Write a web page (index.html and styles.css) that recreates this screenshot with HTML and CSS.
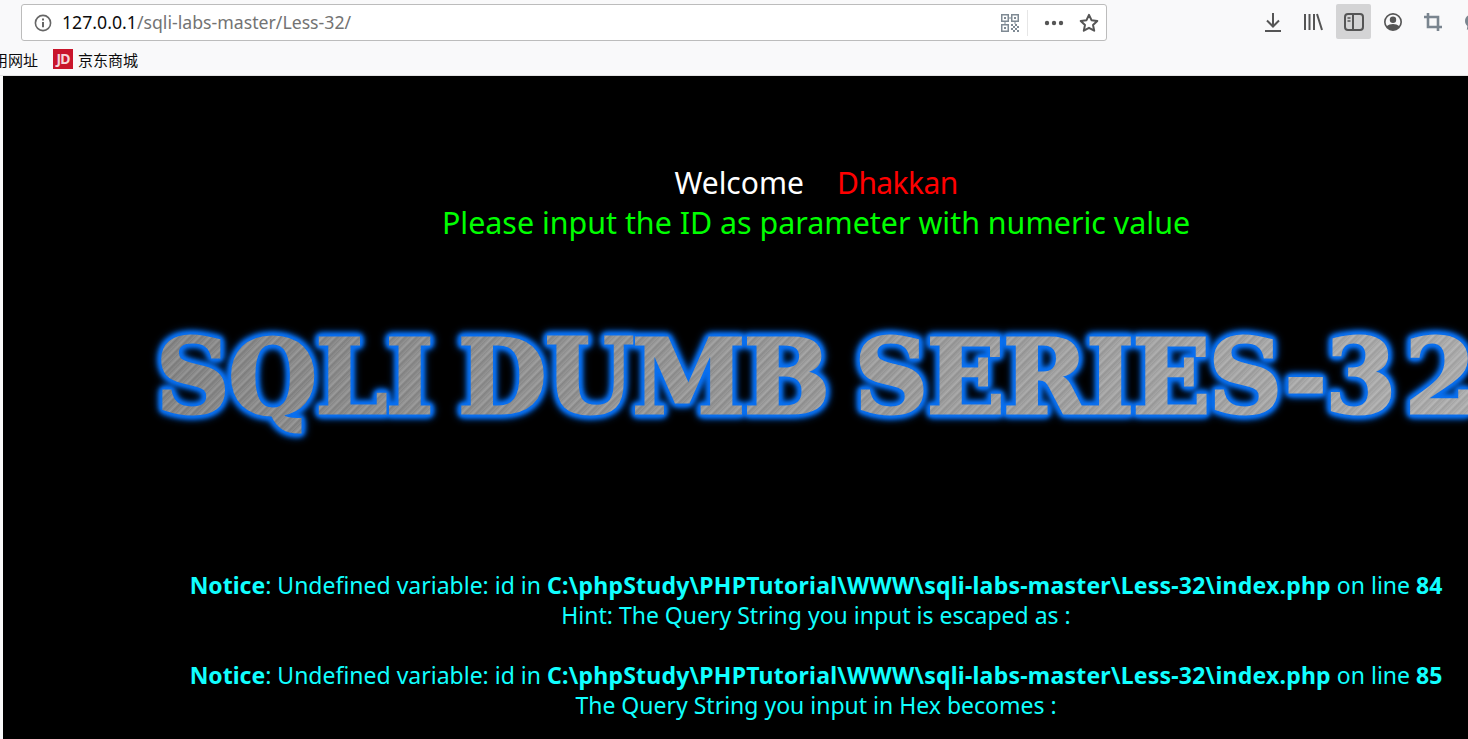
FILE: index.html
```html
<!DOCTYPE html>
<html lang="en">
<head>
  <meta charset="UTF-8">
  <title>Less-32</title>
  <link rel="stylesheet" href="styles.css">
</head>
<body>
  <div class="toolbar">
    <div class="urlbar">
      <svg class="info" width="18" height="18" viewBox="0 0 18 18" fill="none" stroke="#666" stroke-width="1.6">
        <circle cx="9" cy="9" r="7.6"/>
        <path d="M9 8v5.2" stroke-width="2"/>
        <path d="M9 4.400v2" stroke-width="2"/>
      </svg>
      <div class="url"><span class="host">127.0.0.1</span>/sqli-labs-master/Less-32/</div>
      <svg class="qr" width="18" height="18" viewBox="0 0 18 18" fill="#7f8a94">
        <path fill-rule="evenodd" d="M0 0h8v8H0zM1.500 1.500v5h5v-5zM10 0h8v8h-8zM11.500 1.500v5h5v-5zM0 10h8v8H0zM1.500 11.500v5h5v-5z"/>
        <path d="M3 3h2v2H3zM13 3h2v2h-2zM3 13h2v2H3zM10 10h2v2h-2zM14 10h2v2h-2zM12 12h2v2h-2zM16 12h2v2h-2zM10 14h2v2h-2zM14 14h2v2h-2zM12 16h2v2h-2zM16 16h2v2h-2zM8.500 3h1v2h-1zM3 8.500h2v1H3zM13 8.500h2v1h-2z"/>
      </svg>
      <div class="divider"></div>
      <svg class="more" width="20" height="6" viewBox="0 0 20 6" fill="#555">
        <circle cx="3" cy="3" r="2.200"/>
        <circle cx="10" cy="3" r="2.200"/>
        <circle cx="17" cy="3" r="2.200"/>
      </svg>
      <svg class="star" width="20" height="20" viewBox="0 0 20 20" fill="none" stroke="#555" stroke-width="2" stroke-linejoin="round">
        <path d="M10 1.800l2.500 5.400 5.800.7-4.300 4 1.200 5.800-5.200-2.900-5.200 2.900 1.200-5.800-4.300-4 5.800-.7z"/>
      </svg>
    </div>
    <div class="tools">
      <div class="tool">
        <svg width="18" height="20" viewBox="0 0 18 20" fill="none" stroke="#555" stroke-width="2">
          <path d="M9 1v13M3 8.500l6 6 6-6"/>
          <path d="M1 19h16"/>
        </svg>
      </div>
      <div class="tool">
        <svg width="20" height="18" viewBox="0 0 20 18" fill="none" stroke="#555" stroke-width="2">
          <path d="M2 1v16M6.500 1v16M11 1v16M14 1l5 16"/>
        </svg>
      </div>
      <div class="tool active">
        <svg width="20" height="18" viewBox="0 0 20 18" fill="none" stroke="#555" stroke-width="2">
          <rect x="1" y="1" width="18" height="16" rx="3"/>
          <path d="M9 1v16"/>
          <path d="M3.500 5h3M3.500 8h3" stroke-width="1.300"/>
        </svg>
      </div>
      <div class="tool">
        <svg width="18" height="18" viewBox="0 0 18 18" fill="#555">
          <path fill-rule="evenodd" d="M9 0a9 9 0 1 0 0 18A9 9 0 0 0 9 0zm0 1.700a7.300 7.300 0 0 1 6 11.400c-1.300-1.300-3.500-2-6-2s-4.700.7-6 2A7.300 7.300 0 0 1 9 1.700z"/>
          <circle cx="9" cy="6.800" r="3.200"/>
        </svg>
      </div>
      <div class="tool">
        <svg width="18" height="18" viewBox="0 0 18 18" fill="none" stroke="#7a858f" stroke-width="2.600">
          <path d="M4 0v14h14"/>
          <path d="M0 4h14v14"/>
        </svg>
      </div>
      <div class="tool">
        <svg width="18" height="18" viewBox="0 0 18 18" fill="#7a858f">
          <path d="M9 1C4.600 1 1 4 1 8c0 2 .9 3.800 2.400 5l-.6 4 4-2.300c.7.200 1.400.3 2.200.3 4.400 0 8-3 8-7s-3.600-7-8-7z"/>
        </svg>
      </div>
    </div>
  </div>

  <div class="bookmarks">
    <span class="mark first">常用网址</span>
    <span class="jd">JD</span>
    <span class="mark">京东商城</span>
  </div>

  <div class="page">
    <div class="head">
      <div>Welcome&nbsp;&nbsp;&nbsp; <span class="red">Dhakkan</span></div>
      <div class="green">Please input the ID as parameter with numeric value</div>
    </div>

    <div class="banner">SQLI DUMB SERIES-3<span class="last-digit">2</span></div>

    <div class="messages">
      <div><b>Notice</b>: Undefined variable: id in <b class="path">C:\phpStudy\PHPTutorial\WWW\sqli-labs-master\Less-32\index.php</b> on line <b>84</b></div>
      <div>Hint: The Query String you input is escaped as :</div>
      <div class="gap"><b>Notice</b>: Undefined variable: id in <b class="path">C:\phpStudy\PHPTutorial\WWW\sqli-labs-master\Less-32\index.php</b> on line <b>85</b></div>
      <div>The Query String you input in Hex becomes :</div>
    </div>
  </div>
</body>
</html>
```

FILE: styles.css
```css
html, body {
  height: 100%;
}

body {
  margin: 0;
  height: 739px;
  overflow: hidden;
  background-color: #f9f9fa;
  font-family: "Noto Sans", "Noto Sans CJK SC", sans-serif;
}

.toolbar {
  display: flex;
  align-items: flex-start;
  height: 45px;
  padding: 4px 0 0 21px;
  box-sizing: border-box;
}

.urlbar {
  display: flex;
  align-items: center;
  flex-shrink: 0;
  width: 1086px;
  height: 37px;
  background-color: #fff;
  border: 1px solid #bcbcbc;
  border-radius: 3px;
  box-sizing: border-box;
  padding: 0 7px 0 12px;
}

.url {
  flex: 1;
  margin-left: 10px;
  padding-bottom: 2px;
  font-size: 17.7px;
  color: #737373;
  white-space: nowrap;
}

.host {
  color: #0c0c0d;
}

.divider {
  width: 1px;
  height: 26px;
  margin: 0 16px 0 8px;
  background-color: #e6e6e6;
}

.more {
  margin-right: 15px;
}

.tools {
  display: flex;
  margin-left: 148px;
  flex-shrink: 0;
}

.tool {
  display: flex;
  align-items: center;
  justify-content: center;
  width: 35px;
  height: 35px;
  margin-right: 5px;
  border-radius: 2px;
}

.tool.active {
  margin-left: 1px;
  margin-right: 4px;
  background-color: #d4d4d5;
}

.bookmarks {
  display: flex;
  align-items: center;
  height: 31px;
  padding-bottom: 2px;
  font-size: 15px;
  color: #0c0c0d;
  border-bottom: 1px solid #e4e4e4;
  box-sizing: border-box;
  white-space: nowrap;
}

.mark.first {
  margin-left: -22px;
}

.jd {
  width: 20px;
  height: 20px;
  margin: 0 5px 0 15px;
  background-color: #c9152b;
  color: #f6d7da;
  font-size: 14px;
  font-weight: 700;
  line-height: 20px;
  text-align: center;
  letter-spacing: -1px;
}

.page {
  height: 663px;
  margin-left: 3px;
  padding-left: 161px;
  background-color: #000;
  overflow: hidden;
}

.head {
  padding-top: 87px;
  font-size: 30px;
  line-height: 40px;
  color: #fff;
  text-align: center;
  white-space: nowrap;
}

.red {
  margin-left: 2px;
  letter-spacing: -0.6px;
  color: #f00;
}

.green {
  font-size: 30.4px;
  color: #0f0;
}

.banner {
  margin: 76px 0 0 -8px;
  font-family: "DejaVu Serif", serif;
  font-size: 102px;
  font-weight: 900;
  line-height: 116px;
  letter-spacing: -1.5px;
  word-spacing: -8px;
  white-space: nowrap;
  color: transparent;
  background:
    linear-gradient(90deg, rgba(0, 0, 0, 0.1), rgba(255, 255, 255, 0.2)),
    repeating-linear-gradient(135deg, #8e8e8e 0, #a8a8a8 3px, #888 5px, #9d9d9d 8px);
  -webkit-background-clip: text;
  background-clip: text;
  -webkit-text-stroke: 3px transparent;
  filter: drop-shadow(0 0 1.5px #0a70f0) drop-shadow(0 0 1.5px #0a70f0) drop-shadow(0 0 2px #0a70f0) drop-shadow(0 0 2px #0a70f0) drop-shadow(0 0 3px #0a70f0);
}

.last-digit {
  margin-left: 10px;
}

.messages {
  margin-top: 135px;
  font-size: 23px;
  line-height: 30px;
  color: #1ff;
  text-align: center;
  white-space: nowrap;
}

.path {
  letter-spacing: 0.23px;
}

.gap {
  margin-top: 30px;
}
```
